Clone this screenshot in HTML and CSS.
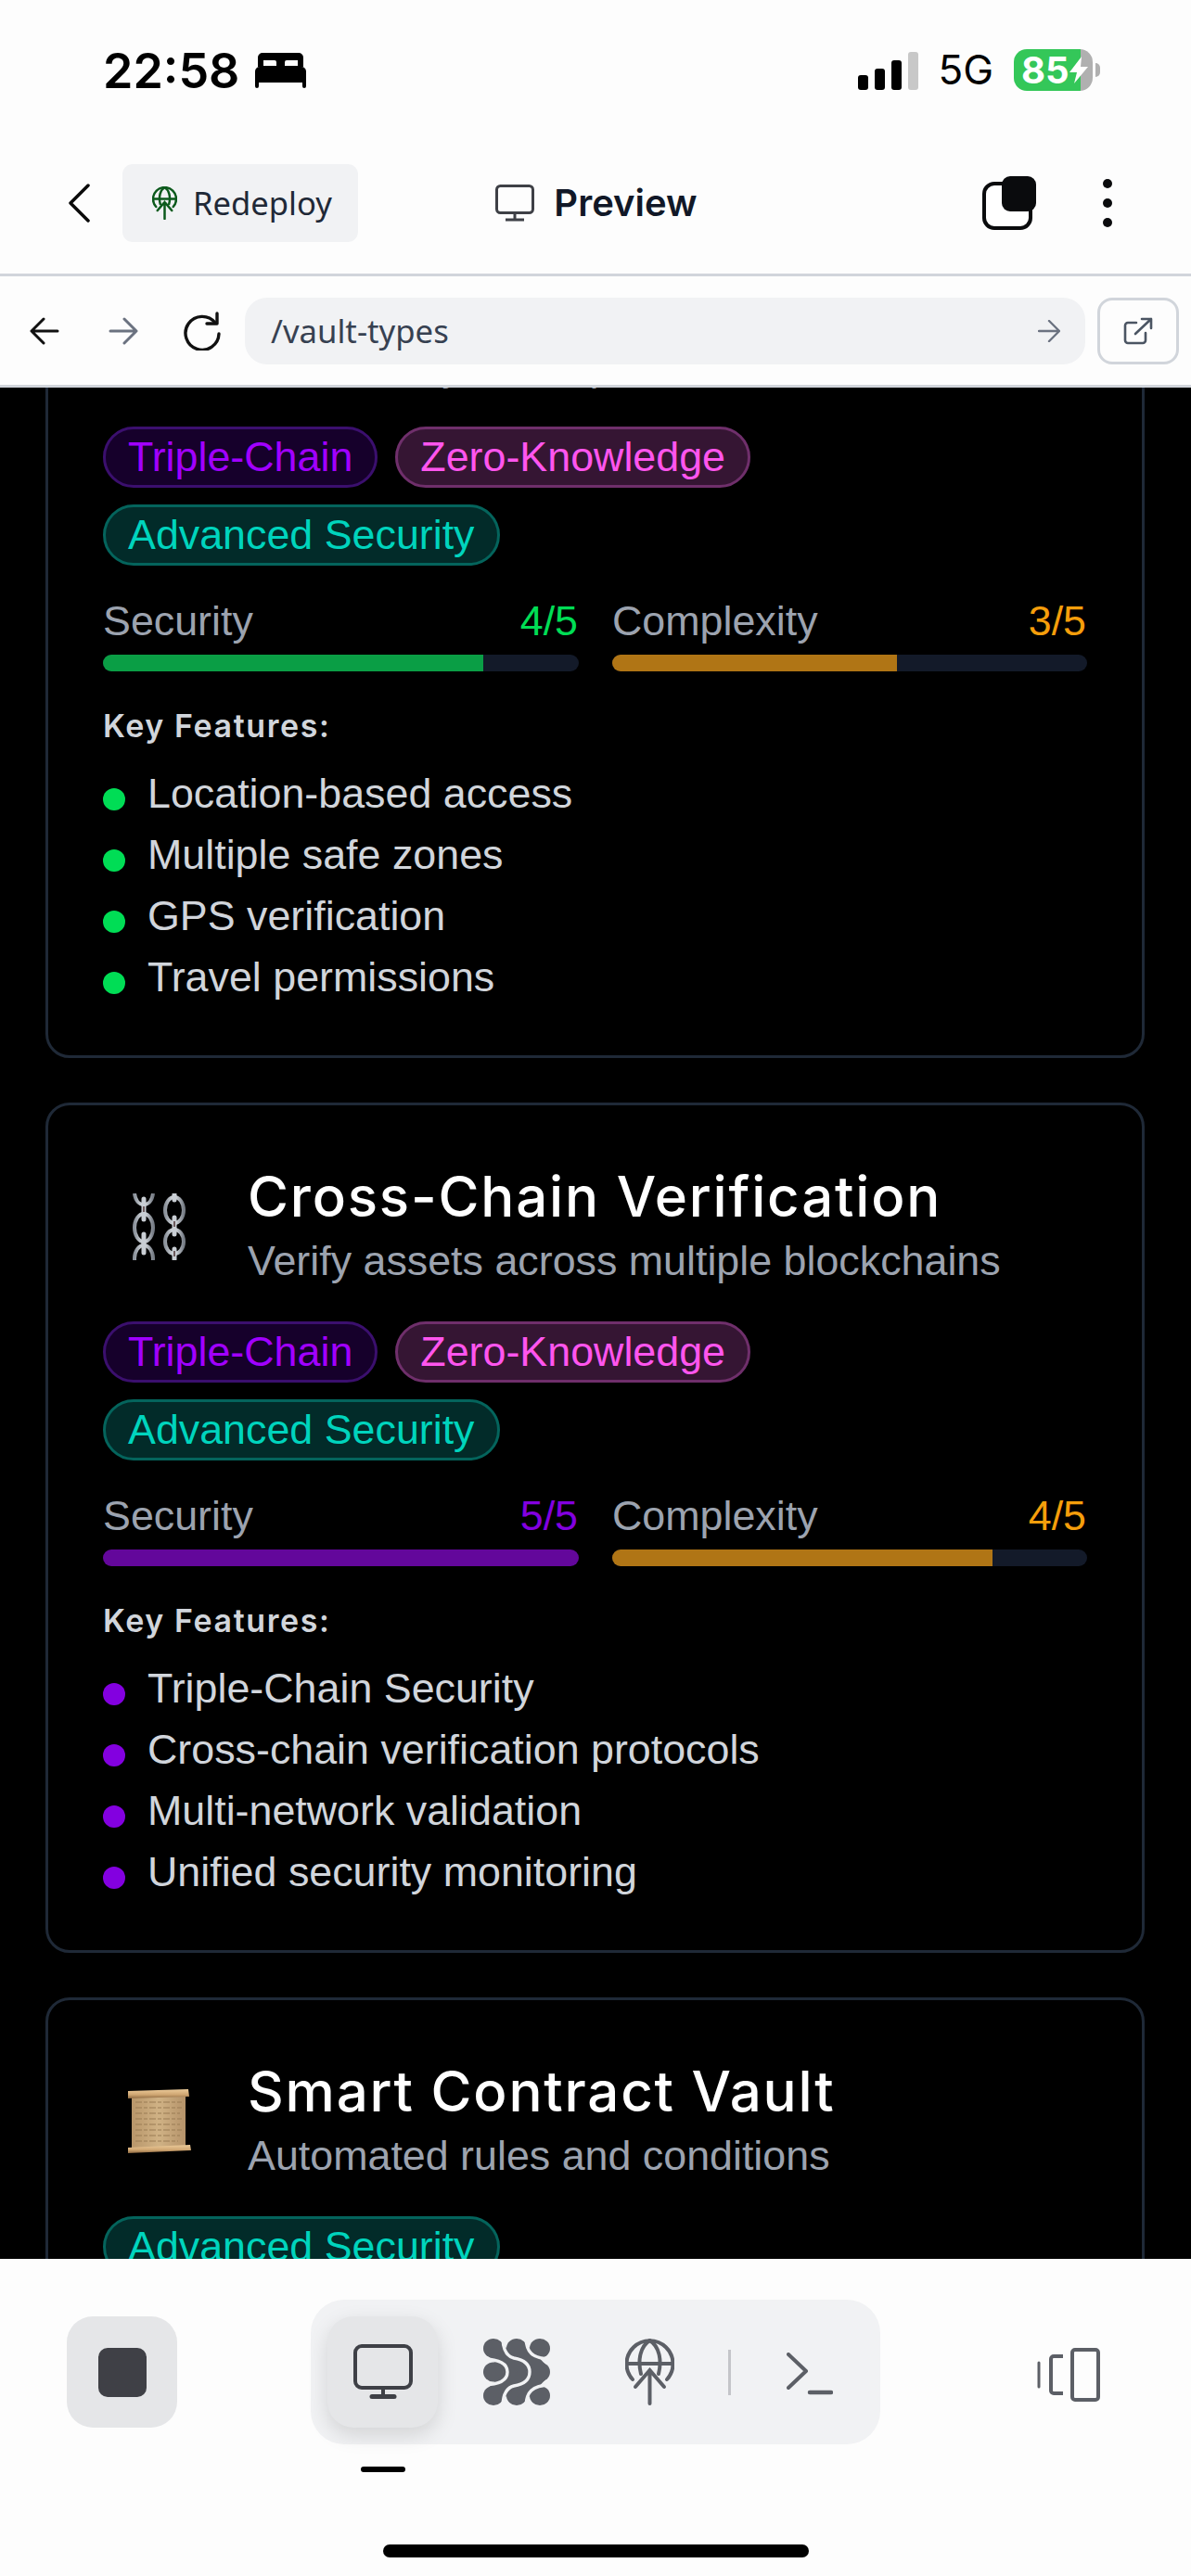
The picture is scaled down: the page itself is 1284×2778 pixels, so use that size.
FILE: index.html
```html
<!DOCTYPE html>
<html lang="en">
<head>
<meta charset="utf-8">
<title>Preview</title>
<link rel="stylesheet" href="styles.css">
</head>
<body>
<div class="app">
  <div class="status">
    <span class="time">22:58</span>
    <svg class="bed" viewBox="0 0 55 38"><path fill="#000" fill-rule="evenodd" d="M8 0h39a5 5 0 0 1 5 5v10H3V5a5 5 0 0 1 5-5zM9 8v6h14V10a2 2 0 0 0-2-2zM32 10v4h14V8H34a2 2 0 0 0-2 2z"/><path fill="#000" d="M5 15h45a5 5 0 0 1 5 5v16a2 2 0 0 1-4 0v-4H4v4a2 2 0 0 1-4 0V20a5 5 0 0 1 5-5z"/></svg>
    <div class="status-right">
      <div class="signal"><i class="s1"></i><i class="s2"></i><i class="s3"></i><i class="s4"></i></div>
      <span class="net">5G</span>
      <div class="battery"><span>85</span><svg class="bolt" viewBox="0 0 20 29"><path fill="#fff" d="M13 0 0 17h8L5 29 20 11h-8z"/></svg></div>
      <i class="nub"></i>
    </div>
  </div>

  <header class="topbar">
    <div class="top-left">
      <svg class="chev" viewBox="0 0 24 42"><path d="M22 2 3 21l19 19" fill="none" stroke="#0a0a0a" stroke-width="3.5" stroke-linecap="round" stroke-linejoin="round"/></svg>
      <button class="redeploy">
        <svg class="mini-globe" viewBox="0 0 53 72"><g fill="none" stroke="#0c5a1c" stroke-width="5" stroke-linecap="round"><path d="M8 44A25 25 0 1 1 45 44"/><path d="M2 27h49"/><path d="M17 38C13 22 17 8 26.500 2c9.500 6 13.500 20 9.500 36"/><path d="M26.500 34v36M11 52l15.500-18L42 52"/></g></svg>
        <span>Redeploy</span>
      </button>
    </div>
    <div class="top-mid">
      <svg class="mon" viewBox="0 0 42 40"><rect x="1.500" y="1.500" width="39" height="29" rx="4" fill="none" stroke="#3e4046" stroke-width="3"/><path d="M21 31v7M11 38h20" stroke="#3e4046" stroke-width="3"/></svg>
      <span class="preview">Preview</span>
    </div>
    <div class="top-right">
      <svg class="copy" viewBox="0 0 58 58"><rect x="2" y="8" width="50" height="48" rx="11" fill="#fff" stroke="#0a0b0d" stroke-width="4"/><rect x="21" y="0" width="37" height="38" rx="9" fill="#0a0b0d"/></svg>
      <div class="dots"><i></i><i></i><i></i></div>
    </div>
  </header>

  <nav class="urlbar">
    <svg class="nav-a" viewBox="0 0 32 30"><path d="M30 15H3M15 2 2 15l13 13" fill="none" stroke="#111" stroke-width="3" stroke-linecap="round" stroke-linejoin="round"/></svg>
    <svg class="nav-b" viewBox="0 0 32 30"><path d="M2 15h27M17 2l13 13-13 13" fill="none" stroke="#6b7280" stroke-width="3" stroke-linecap="round" stroke-linejoin="round"/></svg>
    <svg class="nav-c" viewBox="0 0 44 42"><path d="M36 12A18 18 0 1 0 40 24" fill="none" stroke="#111" stroke-width="3.400" stroke-linecap="round"/><path d="M38 2v11H27" fill="none" stroke="#111" stroke-width="3.400" stroke-linecap="round" stroke-linejoin="round"/></svg>
    <div class="url">
      <span>/vault-types</span>
      <svg class="go" viewBox="0 0 24 24"><path d="M1 12h21M12 1l11 11-11 11" fill="none" stroke="#6b7280" stroke-width="2.400" stroke-linecap="round" stroke-linejoin="round"/></svg>
    </div>
    <div class="ext">
      <svg viewBox="0 0 32 30"><path d="M14 6H5a3 3 0 0 0-3 3v16a3 3 0 0 0 3 3h16a3 3 0 0 0 3-3v-8" fill="none" stroke="#4b5563" stroke-width="2.600" stroke-linecap="round"/><path d="M13 18 30 2M20 2h10v10" fill="none" stroke="#4b5563" stroke-width="2.600" stroke-linecap="round" stroke-linejoin="round"/></svg>
    </div>
  </nav>

  <main class="content">
    <div class="list">
      <article class="card">
        <div class="card-head">
          <div class="emoji"></div>
          <div>
            <h2>Geo-Fenced Vault</h2>
            <p class="sub">Unlock only from specific zones</p>
          </div>
        </div>
        <div class="tags">
          <span class="tag purple">Triple-Chain</span>
          <span class="tag pink">Zero-Knowledge</span>
          <span class="tag teal">Advanced Security</span>
        </div>
        <div class="stats">
          <div>
            <div class="stat-row"><span>Security</span><b class="c-green">4/5</b></div>
            <div class="track"><div class="fill f-green" style="width:80%"></div></div>
          </div>
          <div>
            <div class="stat-row"><span>Complexity</span><b class="c-orange">3/5</b></div>
            <div class="track"><div class="fill f-orange" style="width:60%"></div></div>
          </div>
        </div>
        <h3>Key Features:</h3>
        <ul class="features green">
          <li>Location-based access</li>
          <li>Multiple safe zones</li>
          <li>GPS verification</li>
          <li>Travel permissions</li>
        </ul>
      </article>

      <article class="card">
        <div class="card-head">
          <div class="emoji">
            <svg class="chain" viewBox="0 0 58 72">
              <defs>
                <linearGradient id="steel" x1="0" y1="0" x2="1" y2="0"><stop offset="0" stop-color="#8b929b"/><stop offset=".5" stop-color="#e4e8ec"/><stop offset="1" stop-color="#777d86"/></linearGradient>
              </defs>
              <g fill="none" stroke="url(#steel)" stroke-width="4">
                <ellipse cx="12" cy="37" rx="10" ry="15"/>
                <ellipse cx="12" cy="70" rx="10" ry="14"/>
                <path d="M2 0c1 8 5 12 10 12s9-4 10-12"/>
                <ellipse cx="45" cy="18" rx="10" ry="14"/>
                <ellipse cx="45" cy="52" rx="10" ry="13"/>
              </g>
              <g fill="none" stroke="#c9ced4" stroke-width="5" stroke-linecap="round">
                <path d="M12 6v22M12 44v20M45 1v6M45 26v18M45 60v11"/>
              </g>
              <g fill="none" stroke="#6d5a5c" stroke-width="2"><path d="M12 14v6M45 30v6M45 62v6"/></g>
            </svg>
          </div>
          <div>
            <h2>Cross-Chain Verification</h2>
            <p class="sub">Verify assets across multiple blockchains</p>
          </div>
        </div>
        <div class="tags">
          <span class="tag purple">Triple-Chain</span>
          <span class="tag pink">Zero-Knowledge</span>
          <span class="tag teal">Advanced Security</span>
        </div>
        <div class="stats">
          <div>
            <div class="stat-row"><span>Security</span><b class="c-purple">5/5</b></div>
            <div class="track"><div class="fill f-purple" style="width:100%"></div></div>
          </div>
          <div>
            <div class="stat-row"><span>Complexity</span><b class="c-orange">4/5</b></div>
            <div class="track"><div class="fill f-orange" style="width:80%"></div></div>
          </div>
        </div>
        <h3>Key Features:</h3>
        <ul class="features violet">
          <li>Triple-Chain Security</li>
          <li>Cross-chain verification protocols</li>
          <li>Multi-network validation</li>
          <li>Unified security monitoring</li>
        </ul>
      </article>

      <article class="card">
        <div class="card-head">
          <div class="emoji">
            <svg class="scroll" viewBox="0 0 70 72">
              <defs>
                <linearGradient id="rod" x1="0" y1="0" x2="0" y2="1"><stop offset="0" stop-color="#eccb9a"/><stop offset=".6" stop-color="#cfa672"/><stop offset="1" stop-color="#8f6a42"/></linearGradient>
                <linearGradient id="paper" x1="0" y1="0" x2="1" y2="0"><stop offset="0" stop-color="#b8966a"/><stop offset=".5" stop-color="#d0b285"/><stop offset="1" stop-color="#b5936a"/></linearGradient>
              </defs>
              <rect x="5" y="8" width="58" height="56" fill="url(#paper)"/>
              <g stroke="#9a7c54" stroke-width="1.200" stroke-dasharray="7 2 4 2">
                <path d="M9 15h50M9 21h50M9 27h48M9 33h50M9 39h48M9 45h50M9 51h48M9 57h46"/>
              </g>
              <path d="M1 3 66 1l1 8L1 11z" fill="url(#rod)"/>
              <path d="M1 64 68 61l1 6-68 3z" fill="url(#rod)"/>
            </svg>
          </div>
          <div>
            <h2>Smart Contract Vault</h2>
            <p class="sub">Automated rules and conditions</p>
          </div>
        </div>
        <div class="tags">
          <span class="tag teal">Advanced Security</span>
        </div>
      </article>
    </div>
  </main>

  <footer class="dock">
    <div class="dock-row">
      <button class="stop"><i></i></button>
      <div class="tabs">
        <div class="tab active">
          <svg class="i-mon" viewBox="0 0 64 59"><rect x="2" y="2" width="60" height="45" rx="7" fill="none" stroke="#3e4046" stroke-width="4"/><path d="M32 47v9" stroke="#3e4046" stroke-width="4"/><path d="M20 56.500h24" stroke="#3e4046" stroke-width="5" stroke-linecap="round"/></svg>
          <i class="marker"></i>
        </div>
        <div class="tab">
          <svg class="i-grid" viewBox="0 0 72 72">
            <g fill="#5c5f66">
              <ellipse cx="11" cy="10.500" rx="11" ry="10.500"/><ellipse cx="36" cy="10.500" rx="11" ry="10.500"/><ellipse cx="61" cy="10.500" rx="11" ry="10.500"/>
              <ellipse cx="11" cy="36" rx="11" ry="10.500"/><ellipse cx="36" cy="36" rx="11" ry="10.500"/><ellipse cx="61" cy="36" rx="11" ry="10.500"/>
              <ellipse cx="11" cy="61.500" rx="11" ry="10.500"/><ellipse cx="36" cy="61.500" rx="11" ry="10.500"/><ellipse cx="61" cy="61.500" rx="11" ry="10.500"/>
            </g>
            <g fill="none" stroke="#5c5f66" stroke-width="20">
              <path d="M11 10 36 36M36 10 61 36M36 36 11 62M61 36 36 62"/>
            </g>
            <g fill="none" stroke="#f1f2f4" stroke-width="3.400">
              <path d="M21 -2C21 12 25 19 33 21C45 23 50 28 50 36C50 44 45 49 33 51C25 53 21 60 21 74"/>
              <path d="M-2 22C12 22 26 24 26 36S12 50 -2 50"/>
              <path d="M46 -2C46 14 52 22 74 22"/>
              <path d="M46 74C46 58 52 50 74 50"/>
            </g>
          </svg>
        </div>
        <div class="tab">
          <svg class="i-globe" viewBox="0 0 53 72"><g fill="none" stroke="#5c5f66" stroke-width="4" stroke-linecap="round"><path d="M8 44A25 25 0 1 1 45 44"/><path d="M2 27h49"/><path d="M17 38C13 22 17 8 26.500 2c9.500 6 13.500 20 9.500 36"/><path d="M26.500 34v36M11 52l15.500-18L42 52"/></g></svg>
        </div>
        <i class="sep"></i>
        <div class="tab">
          <svg class="i-term" viewBox="0 0 50 46"><path d="M2 2l19 18L2 38" fill="none" stroke="#5c5f66" stroke-width="4" stroke-linecap="round" stroke-linejoin="round"/><path d="M25 43h23" stroke="#5c5f66" stroke-width="4.500" stroke-linecap="round"/></svg>
        </div>
      </div>
      <svg class="i-dev" viewBox="0 0 68 58"><rect x="38" y="2" width="28" height="54" rx="3" fill="none" stroke="#5c5f66" stroke-width="4"/><path d="M28 9H18a3 3 0 0 0-3 3v34a3 3 0 0 0 3 3h10" fill="none" stroke="#5c5f66" stroke-width="4"/><path d="M2 16v26" stroke="#5c5f66" stroke-width="3" stroke-linecap="round"/></svg>
    </div>
    <div class="home"></div>
  </footer>
</div>
</body>
</html>
```

FILE: styles.css
```css
* { box-sizing: border-box; }
html, body { margin: 0; padding: 0; background: #000; }
.app {
  width: 1284px;
  height: 2778px;
  display: flex;
  flex-direction: column;
  overflow: hidden;
  font-family: "Liberation Sans", Arial, sans-serif;
  background: #fdfdfd;
}
svg { display: block; flex: none; }
i { display: block; }

/* status bar */
.status {
  height: 150px;
  padding: 4px 98px 0 111px;
  display: flex;
  align-items: center;
  background: #fdfdfd;
}
.time { font: 600 52px/56px Inter, sans-serif; color: #000; }
.bed { width: 55px; height: 38px; margin-left: 17px; margin-top: -2px; }
.status-right { margin-left: auto; margin-top: -4px; display: flex; align-items: center; }
.signal { display: flex; align-items: flex-end; gap: 7px; height: 41px; margin-top: 2px; }
.signal i { width: 11px; border-radius: 3px; background: #000; }
.signal .s1 { height: 16px; }
.signal .s2 { height: 23px; }
.signal .s3 { height: 32px; }
.signal .s4 { height: 41px; background: #c8c8c8; }
.net { margin-left: 21px; font: 400 44px/50px Inter, sans-serif; color: #000; }
.battery {
  margin-left: 22px;
  width: 85px;
  height: 45px;
  border-radius: 14px;
  padding-left: 8px;
  display: flex;
  align-items: center;
  background: linear-gradient(90deg, #34c759 0 72px, #b0b0b0 72px);
}
.battery span { font: 700 40px/45px Inter, sans-serif; color: #fff; }
.bolt { width: 20px; height: 29px; }
.nub { width: 5px; height: 15px; margin-left: 3px; border-radius: 0 8px 8px 0; background: #b0b0b0; }

/* top bar */
.topbar {
  height: 148px;
  display: grid;
  grid-template-columns: 1fr auto 1fr;
  align-items: center;
  padding: 0 85px 7px 73px;
  background: #fdfdfd;
  border-bottom: 3px solid #d1d5db;
}
.top-left { display: flex; align-items: center; }
.chev { width: 24px; height: 42px; }
.redeploy {
  margin-left: 35px;
  width: 254px;
  height: 84px;
  border: 0;
  border-radius: 11px;
  background: #f1f2f4;
  padding: 0 0 0 32px;
  display: flex;
  align-items: center;
  gap: 17px;
  font: 400 34.600px/44px "Noto Sans", sans-serif;
  color: #1f2937;
}
.mini-globe { width: 27px; height: 36px; }
.top-mid { display: flex; align-items: center; gap: 21px; margin-left: 14px; }
.mon { width: 42px; height: 40px; }
.preview { font: 600 40px/48px Inter, sans-serif; color: #111827; }
.top-right { display: flex; align-items: center; justify-content: flex-end; gap: 72px; }
.copy { width: 58px; height: 58px; }
.dots { display: flex; flex-direction: column; gap: 11px; }
.dots i { width: 10px; height: 10px; border-radius: 50%; background: #0a0b0d; }

/* url bar */
.urlbar {
  height: 120px;
  display: flex;
  align-items: center;
  padding: 0 13px 0 32px;
  background: #fdfdfd;
  border-bottom: 3px solid #d1d5db;
}
.nav-a, .nav-b { width: 32px; height: 30px; }
.nav-b { margin-left: 53px; }
.nav-c { width: 44px; height: 42px; margin-left: 47px; }
.url {
  margin-left: 24px;
  width: 906px;
  height: 72px;
  border-radius: 24px;
  background: #f1f2f4;
  padding: 0 27px 0 28px;
  display: flex;
  align-items: center;
  justify-content: space-between;
  font: 400 34.700px/44px "Noto Sans", sans-serif;
  color: #374151;
}
.go { width: 24px; height: 24px; }
.ext {
  margin-left: 13px;
  width: 88px;
  height: 72px;
  border: 3px solid #d1d5db;
  border-radius: 16px;
  display: flex;
  align-items: center;
  justify-content: center;
}
.ext svg { width: 32px; height: 30px; }

/* content */
.content {
  flex: 1;
  min-height: 0;
  overflow: hidden;
  background: #000;
  padding: 0 50px 0 49px;
}
.list { margin-top: -194px; display: flex; flex-direction: column; gap: 48px; }
.card {
  border: 3px solid #1f2937;
  border-radius: 26px;
  background: #000;
  padding: 62px 59px 52px;
}
.card-head { display: flex; align-items: center; gap: 34px; }
.emoji { width: 122px; display: flex; justify-content: center; }
.chain { width: 58px; height: 72px; }
.scroll { width: 70px; height: 72px; }
h2 { margin: 0; font: 500 60px/72px Inter, sans-serif; letter-spacing: 1.8px; color: #fff; white-space: nowrap; }
.sub { margin: 0; font-size: 44.800px; line-height: 66px; color: #9ca3af; }
.tags { margin-top: 33px; display: flex; flex-wrap: wrap; gap: 18px 19px; }
.tag {
  height: 66px;
  padding: 0 24px 2px;
  display: inline-flex;
  align-items: center;
  border: 3px solid;
  border-radius: 33px;
  font-size: 44.800px;
}
.purple { color: #a100ff; background: #16002b; border-color: #3b0f6e; }
.pink { color: #ff55ee; background: #351533; border-color: #6f2f6b; }
.teal { color: #00d4bd; background: #022b29; border-color: #04645c; }

.stats { margin-top: 34px; display: grid; grid-template-columns: 513px 512px; gap: 36px; }
.stat-row { display: flex; justify-content: space-between; font-size: 44.800px; line-height: 50px; color: #9ca3af; padding-right: 1px; }
.stat-row b { font-weight: 400; }
.c-green { color: #00dd55; }
.c-orange { color: #f59e0b; }
.c-purple { color: #8300e0; }
.track { margin-top: 12px; height: 18px; border-radius: 9px; background: #131a29; overflow: hidden; }
.fill { height: 100%; }
.f-green { background: #0a9e45; }
.f-orange { background: #b07515; }
.f-purple { background: #63079b; }

h3 { margin: 39px 0 0; font: 600 34px/40px Inter, sans-serif; letter-spacing: 1.6px; color: #d1d5db; }
.features { list-style: none; margin: 19px 0 0; padding: 0; }
.features li {
  height: 66px;
  display: flex;
  align-items: center;
  gap: 24px;
  font-size: 44.800px;
  color: #d1d5db;
}
.features li::before {
  content: "";
  width: 24px;
  height: 24px;
  margin-top: 14px;
  border-radius: 50%;
  flex: none;
}
.features.green li::before { background: #00dd55; }
.features.violet li::before { background: #8300e0; }

/* dock */
.dock {
  position: relative;
  height: 342px;
  flex: none;
  background: #fdfdfd;
  padding-top: 44px;
  display: flex;
  flex-direction: column;
}
.dock-row { display: flex; align-items: flex-start; padding: 0 98px 0 72px; }
.stop {
  margin-top: 18px;
  width: 119px;
  height: 120px;
  border: 0;
  padding: 0;
  border-radius: 28px;
  background: #e5e6e8;
  display: flex;
  align-items: center;
  justify-content: center;
}
.stop i { width: 52px; height: 53px; border-radius: 10px; background: #3f4046; }
.tabs {
  margin-left: 144px;
  width: 614px;
  height: 156px;
  padding: 18px 17px 18px 18px;
  border-radius: 36px;
  background: #f1f2f4;
  display: flex;
  align-items: center;
  gap: 25px;
}
.tab {
  position: relative;
  width: 119px;
  height: 120px;
  flex: none;
  border-radius: 28px;
  display: flex;
  align-items: center;
  justify-content: center;
}
.tab.active { background: #e5e6e8; box-shadow: 0 8px 22px rgba(0, 0, 0, .13); }
.marker {
  position: absolute;
  left: 36px;
  top: 162px;
  width: 48px;
  height: 6px;
  border-radius: 3px;
  background: #000;
}
.i-mon { width: 64px; height: 59px; margin-top: -1px; }
.i-grid { width: 72px; height: 72px; }
.i-globe { width: 53px; height: 72px; }
.i-term { width: 50px; height: 46px; margin-top: 4px; }
.sep { width: 3px; height: 49px; background: #c4c5c9; flex: none; }
.i-dev { width: 68px; height: 58px; margin-left: auto; margin-top: 52px; }
.home {
  margin: auto auto 20px;
  width: 459px;
  height: 14px;
  border-radius: 7px;
  background: #000;
}
```
